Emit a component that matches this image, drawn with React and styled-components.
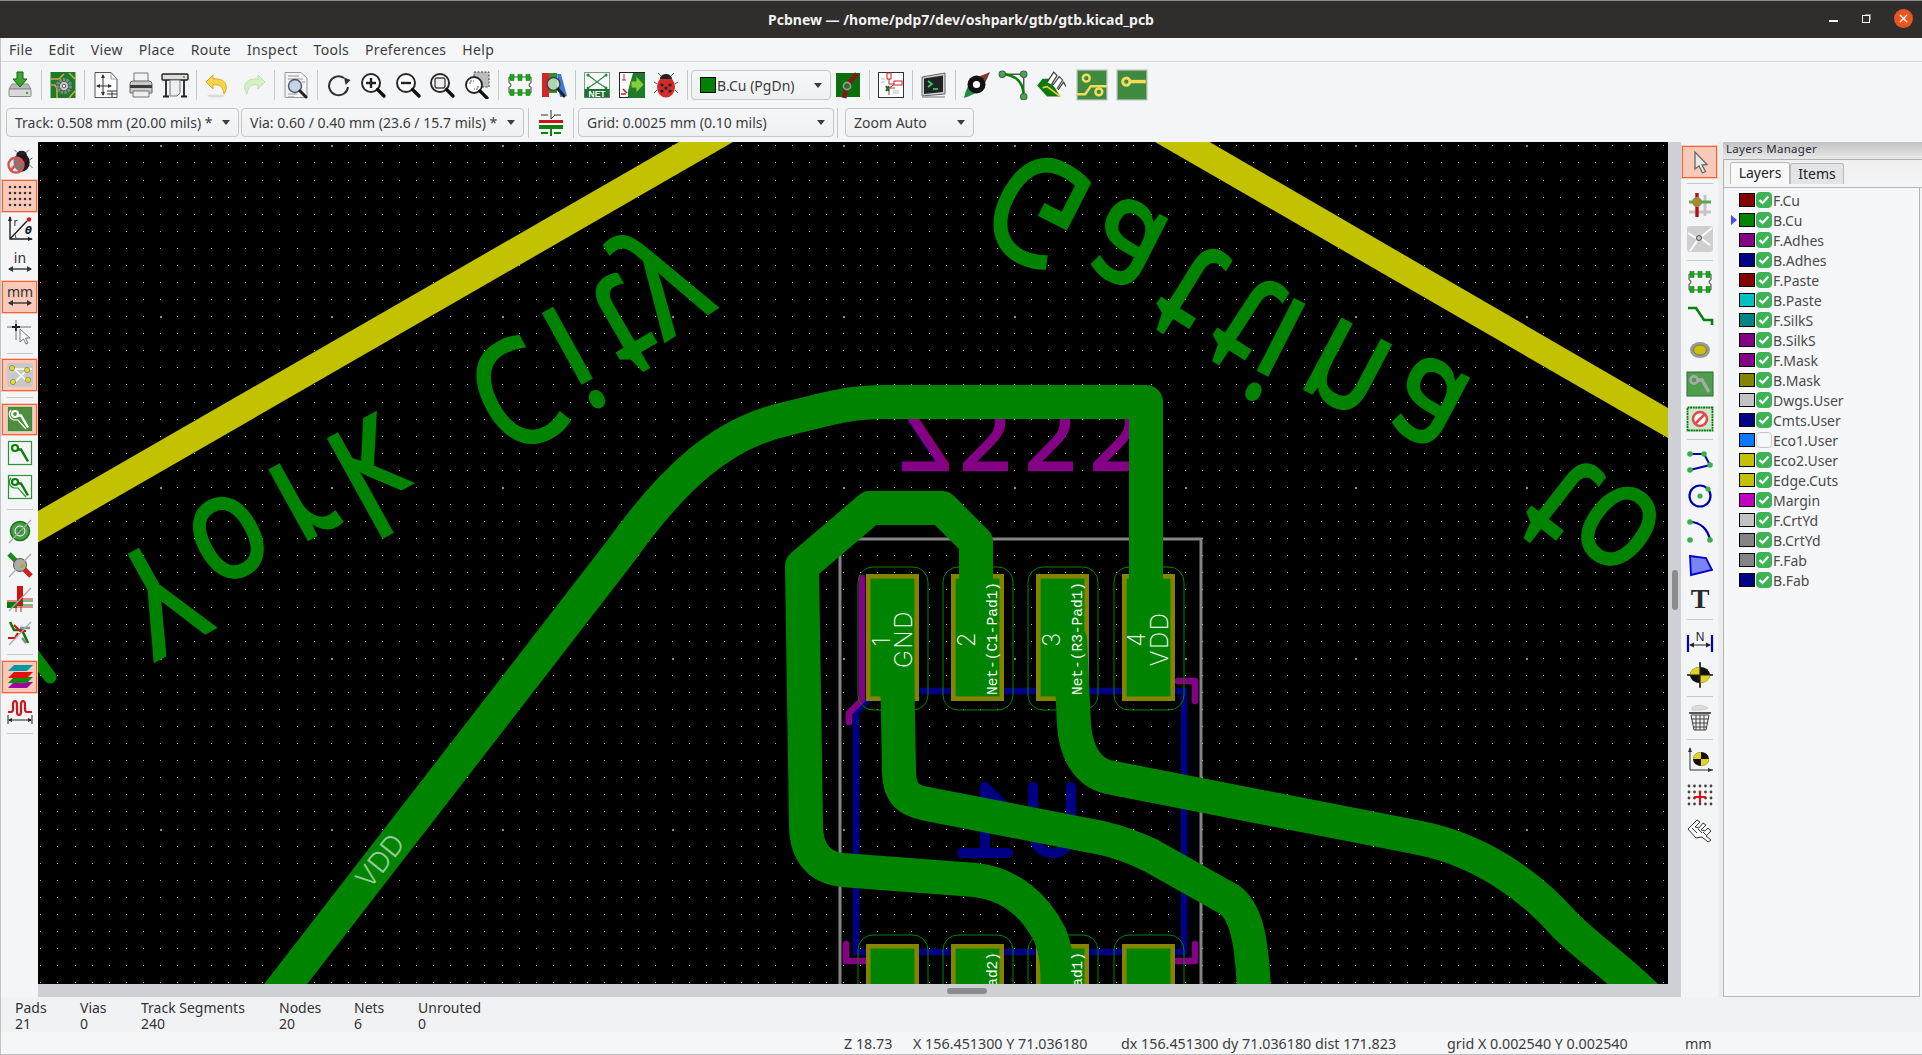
import React from "react";
import styled, { createGlobalStyle } from "styled-components";
import { X } from "lucide-react";

const GlobalStyle = createGlobalStyle`
  html, body { margin: 0; padding: 0; background: #f2f3f5; overflow: hidden; }
  body { font-family: "Noto Sans", "Open Sans", sans-serif; }
`;

const Window = styled.div`
  width: 1922px;
  height: 1055px;
  display: flex;
  flex-direction: column;
  background: #f2f3f5;
  color: #3c3c3c;
  box-sizing: border-box;
  border-left: 1px solid #c4c4c4;
  border-bottom: 1px solid #bdbdbd;
`;

const TitleBar = styled.div`
  height: 38px;
  flex: none;
  margin-left: -1px;
  box-sizing: border-box;
  border-top: 1px solid #8a8a88;
  background: #2f2e2c;
  display: grid;
  grid-template-columns: 1fr auto 1fr;
  align-items: center;
  color: #f2f2f0;
`;

const Title = styled.div`
  font-size: 14px;
  font-weight: 700;
  grid-column: 2;
  margin-top: -1px;
`;

const WindowButtons = styled.div`
  grid-column: 3;
  justify-self: end;
  display: flex;
  align-items: center;
  padding-right: 9px;
  gap: 24px;
  margin-top: -2px;
`;

const MinButton = styled.div`
  width: 9px;
  height: 2px;
  background: #f4f4f4;
  margin-top: 5px;
`;

const RestoreButton = styled.div`
  width: 6px;
  height: 6px;
  border: 1.5px solid #f4f4f4;
  box-shadow: 2px -2px 0 -1px #8a8a88;
`;

const CloseButton = styled.div`
  width: 19px;
  height: 19px;
  border-radius: 50%;
  background: #e95420;
  color: #fff;
  display: flex;
  align-items: center;
  justify-content: center;
`;

const MenuBar = styled.div`
  height: 24px;
  flex: none;
  display: flex;
  align-items: center;
  background: #f5f6f7;
  box-sizing: border-box;
  border-bottom: 1px solid #d8d9db;
  font-size: 14px;
`;

const MenuItem = styled.div`
  padding: 0 8px;
  letter-spacing: 0.3px;
`;

const TopBar = styled.div`
  height: 46px;
  flex: none;
  display: flex;
  align-items: center;
  padding-left: 2px;
  background: #f4f5f7;
`;

const SelectBar = styled.div`
  height: 34px;
  flex: none;
  display: flex;
  align-items: flex-start;
  padding-left: 5px;
  background: #f4f5f7;
`;

const ToolButton = styled.div`
  flex: none;
  width: ${(p) => (p.$vertical ? "37px" : (p.$wide || 34.5) + "px")};
  height: ${(p) => (p.$vertical ? p.$pitch + "px" : p.$short ? "29px" : "34.5px")};
  display: flex;
  align-items: center;
  justify-content: center;
  box-sizing: border-box;
  ${(p) =>
    p.$active &&
    `background: #f9c9b9;
     outline: 1.5px solid #ee6434;
     outline-offset: -2.5px;`}
`;

const HSep = styled.div`
  flex: none;
  width: 8.5px;
  height: 30px;
  display: flex;
  justify-content: center;
  &::before {
    content: "";
    width: 1px;
    background: #c6c8ca;
  }
`;

const VSep = styled.div`
  flex: none;
  height: ${(p) => p.$size}px;
  display: flex;
  align-items: center;
  justify-content: center;
  &::before {
    content: "";
    height: 1px;
    width: 26px;
    background: #c6c8ca;
  }
`;

const Select = styled.div`
  flex: none;
  width: ${(p) => p.$width}px;
  height: ${(p) => p.$height || 29}px;
  margin-left: ${(p) => p.$left || 0}px;
  box-sizing: border-box;
  border: 1px solid #c4c6c8;
  border-radius: 4px;
  background: linear-gradient(#f6f7f8, #eff0f2);
  display: flex;
  align-items: center;
  padding: 0 8px;
  font-size: 14px;
  white-space: nowrap;
`;

const Caret = styled.span`
  margin-left: auto;
  width: 0;
  height: 0;
  border-left: 4.5px solid transparent;
  border-right: 4.5px solid transparent;
  border-top: 5px solid #3c3c3c;
`;

const CuSwatch = styled.span`
  width: 14px;
  height: 14px;
  background: #008400;
  border: 1px solid #000;
  margin-right: 1px;
  flex: none;
`;

const Body = styled.div`
  height: 855px;
  flex: none;
  display: flex;
`;

const LeftBar = styled.div`
  width: 37px;
  flex: none;
  display: flex;
  flex-direction: column;
  padding-top: 3px;
  background: #f4f5f7;
`;

const RightBar = styled.div`
  width: 37px;
  flex: none;
  display: flex;
  flex-direction: column;
  align-items: center;
  padding-top: 3px;
  background: #f4f5f7;
`;

const CanvasColumn = styled.div`
  width: 1643px;
  flex: none;
  display: grid;
  grid-template-columns: 1630px 13px;
  grid-template-rows: 842px 13px;
  background: #ced0d3;
`;

const Board = styled.svg`
  display: block;
  background: #000;
  width: 1630px;
  height: 842px;
`;

const VScroll = styled.div`
  display: flex;
  align-items: flex-start;
  justify-content: center;
  padding-top: 428px;
  box-sizing: border-box;
  &::before {
    content: "";
    width: 6px;
    height: 40px;
    border-radius: 3px;
    background: #8b8c8e;
  }
`;

const HScroll = styled.div`
  display: flex;
  align-items: center;
  padding-left: 909px;
  box-sizing: border-box;
  &::before {
    content: "";
    width: 40px;
    height: 6px;
    border-radius: 3px;
    background: #8b8c8e;
  }
`;

const Sash = styled.div`
  width: 5px;
  flex: none;
  background: #eceded;
`;

const LayersManager = styled.div`
  flex: 1;
  min-width: 0;
  display: flex;
  flex-direction: column;
`;

const PaneCaption = styled.div`
  height: 17px;
  flex: none;
  background: linear-gradient(#c2c3c4, #e9e9e9);
  font-size: 11.5px;
  line-height: 14px;
  padding-left: 3px;
  letter-spacing: 0.3px;
  color: #2c2c38;
`;

const TabStrip = styled.div`
  height: 29px;
  flex: none;
  box-sizing: border-box;
  background: linear-gradient(#efefef, #f4f5f6);
  border-top: 1px solid #b0b0b0;
  border-left: 1px solid #b0b0b0;
  border-bottom: 1px solid #b5b5b5;
  display: flex;
  align-items: flex-end;
  padding-left: 6px;
`;

const Tab = styled.div`
  width: ${(p) => p.$width}px;
  height: ${(p) => (p.$active ? 22 : 21)}px;
  box-sizing: border-box;
  margin-bottom: 3px;
  border: 1px solid #b8b8b8;
  border-bottom: none;
  border-radius: 3px 3px 0 0;
  background: ${(p) => (p.$active ? "#f9f9fa" : "#e3e4e6")};
  font-size: 14px;
  line-height: 20px;
  text-align: center;
  color: #222;
`;

const LayerList = styled.div`
  flex: 1;
  box-sizing: border-box;
  border-left: 1px solid #b5b5b5;
  border-right: 1px solid #b5b5b5;
  border-bottom: 1px solid #b5b5b5;
  background: #f6f7f9;
  padding-top: 2px;
  margin-right: 2px;
`;

const LayerRow = styled.div`
  height: 20px;
  display: flex;
  align-items: center;
  font-size: 14px;
  color: #4a4a4a;
  padding-left: 7px;
`;

const ArrowSlot = styled.span`
  width: 8px;
  flex: none;
  display: flex;
  &::before {
    content: "";
    display: ${(p) => (p.$on ? "block" : "none")};
    border-top: 5.5px solid transparent;
    border-bottom: 5.5px solid transparent;
    border-left: 6px solid #4a4aff;
  }
`;

const Swatch = styled.span`
  width: 16px;
  height: 14px;
  flex: none;
  box-sizing: border-box;
  border: 1px solid #000;
  background: ${(p) => p.$color};
`;

const CheckBox = styled.span`
  width: 16px;
  height: 16px;
  flex: none;
  margin: 0 1px;
  box-sizing: border-box;
  border-radius: 4px;
  display: flex;
  align-items: center;
  justify-content: center;
  background: ${(p) => (p.$on ? "#3db454" : "#f6f7f9")};
  border: 1px solid ${(p) => (p.$on ? "#3db454" : "#c4c6c8")};
`;

const MessagePanel = styled.div`
  height: 35px;
  flex: none;
  display: flex;
  background: #f1f2f4;
  padding-left: 14px;
  font-size: 14px;
  line-height: 16px;
  padding-top: 3px;
  box-sizing: border-box;
`;

const MessageCell = styled.div`
  width: ${(p) => p.$width}px;
  flex: none;
  display: flex;
  flex-direction: column;
`;

const StatusBar = styled.div`
  flex: 1;
  min-height: 0;
  display: flex;
  align-items: center;
  background: #f5f6f8;
  font-size: 14.3px;
  white-space: nowrap;
  padding-left: 843px;
`;

const StatusField = styled.div`
  width: ${(p) => p.$width}px;
  flex: none;
`;

const Stat = styled.div`
  color: #333;
`;

/* icons, all drawn on a 28 box */
const Ico = ({ children, size = 28 }) => (
  <svg width={size} height={size} viewBox="0 0 28 28" fill="none">{children}</svg>
);

const Mag = ({ children }) => (
  <g>
    <circle cx="12" cy="12" r="9" fill="#fff" stroke="#2a2a2a" strokeWidth="2" />
    {children}
    <path d="M18.5 18.5L25 25" stroke="#111" strokeWidth="3.4" strokeLinecap="round" />
  </g>
);

const Ladybug = ({ body = "#d12b2b" }) => (
  <g>
    <path d="M9 5L6 2M19 5L22 2M5 13L2 11M23 13L26 11M5 19L2 22M23 19L26 22" stroke="#555" />
    <ellipse cx="14" cy="16" rx="9" ry="10.5" fill={body} />
    <path d="M8 8a6 5 0 0 1 12 0Z" fill="#222" />
    <circle cx="10" cy="14" r="1.6" fill="#222" /><circle cx="18" cy="14" r="1.6" fill="#222" />
    <circle cx="10" cy="20" r="1.6" fill="#222" /><circle cx="18" cy="20" r="1.6" fill="#222" />
    <circle cx="14" cy="17" r="1.6" fill="#222" />
  </g>
);

const Chip = () => (
  <g>
    <path d="M3 6H25V12A2 2 0 0 0 25 16V22H3V16A2 2 0 0 0 3 12Z" fill="#f4f4f4" stroke="#444" />
    {[4, 12, 20].map((x) => (
      <g key={x}>
        <rect x={x} y="3.5" width="4" height="6" fill="#12b012" stroke="#0a6a0a" strokeWidth=".5" />
        <rect x={x} y="18.5" width="4" height="6" fill="#12b012" stroke="#0a6a0a" strokeWidth=".5" />
      </g>
    ))}
  </g>
);

const Strike = () => <path d="M3 26L25 3" stroke="#aaa" strokeWidth="1.2" />;

const TrackBox = ({ filled, double }) => (
  <g>
    <rect x="2.5" y="2.5" width="23" height="23" fill={filled ? "#4d8f3e" : "#f4f5f7"} stroke="#2f8f3a" strokeWidth="1.2" />
    {double && <path d="M5 5a6 6 0 0 0 3 10h4l8 9" stroke={filled ? "#fff" : "#2f8f3a"} strokeWidth="1.2" />}
    <circle cx="9" cy="9" r="3" stroke={filled ? "#fff" : "#0a7d0a"} strokeWidth="2.2" />
    <path d="M12 10.5h3l7 12" stroke={filled ? "#fff" : "#0a7d0a"} strokeWidth="2.4" />
  </g>
);

const PcbGreen = ({ children }) => (
  <g>
    <rect x="1" y="1" width="26" height="26" fill="#3f8a3f" stroke="#a8b8a8" />
    {children}
  </g>
);

const MeasureText = ({ label }) => (
  <g>
    <text x="14" y="14" textAnchor="middle" fontFamily="Noto Sans, sans-serif" fontSize="14" fill="#333">{label}</text>
    <path d="M3 20H25" stroke="#333" strokeWidth="1.4" />
    <path d="M2 20L7 17V23ZM26 20L21 17V23Z" fill="#333" />
  </g>
);

const icons = {
  save: (
    <Ico>
      <path d="M3 18L6 13H22L25 18Z" fill="#b9b9b9" stroke="#8a8a8a" />
      <rect x="3" y="18" width="22" height="7.5" rx="1" fill="#d9d9d9" stroke="#8a8a8a" />
      <circle cx="21" cy="22" r="1.2" fill="#2fb32f" />
      <path d="M11 1H17V8H21L14 16L7 8H11Z" fill="#36a82b" stroke="#1c5e14" />
    </Ico>
  ),
  boardSetup: (
    <Ico>
      <rect x="1.5" y="1" width="25" height="26" fill="#1c7a2c" />
      <path d="M2 8H10L15 3M2 14H6L8 18V27M20 2L26 8M26 20L20 27" stroke="#d7a53b" strokeWidth="1.6" />
      <circle cx="15" cy="15" r="6.5" stroke="#8a8a8a" strokeWidth="3" strokeDasharray="2.4 1.2" />
      <circle cx="15" cy="15" r="4.5" fill="#cfcfcf" stroke="#666" />
      <circle cx="15" cy="15" r="1.8" fill="#fff" stroke="#555" />
    </Ico>
  ),
  pageSetup: (
    <Ico>
      <path d="M3 1.5H19L25 8V26.5H3Z" fill="#fff" stroke="#555" />
      <path d="M19 1.5V8H25" stroke="#999" />
      <path d="M11 4V24M5 15H19" stroke="#333" />
      <path d="M11 3L9 7H13ZM11 25L9 21H13ZM4 15L8 13V17ZM20 15L16 13V17Z" fill="#333" />
      <path d="M15 20H25M15 23H25M20 20V26" stroke="#333" />
    </Ico>
  ),
  print: (
    <Ico>
      <path d="M7 2H21V11H7Z" fill="#f4f4f4" stroke="#777" />
      <path d="M3 13Q3 10 6 10H22Q25 10 25 13V22H3Z" fill="#c8c8c8" stroke="#666" />
      <rect x="3" y="14" width="22" height="3" fill="#3a3a3a" />
      <path d="M6 20H22V26H6Z" fill="#eee" stroke="#777" />
    </Ico>
  ),
  plot: (
    <Ico>
      <rect x="1" y="3" width="26" height="6" rx="1" fill="#ddd" stroke="#222" strokeWidth="1.4" />
      <circle cx="23" cy="6" r="1" fill="#1faf1f" />
      <path d="M5 9V25M23 9V25M2 25.5H8M20 25.5H26" stroke="#222" strokeWidth="1.8" />
      <path d="M9 9H19V22L16 25H9Z" fill="#eee" stroke="#777" />
    </Ico>
  ),
  undo: (
    <Ico>
      <path d="M9 4L2 11L9 18V14C15 13 19 15 20 23C25 15 22 7 9 8Z" fill="#f5d44a" stroke="#d6ae25" />
      <ellipse cx="12" cy="25" rx="9" ry="1.6" fill="#ddd" />
    </Ico>
  ),
  redo: (
    <Ico>
      <path d="M19 4L26 11L19 18V14C13 13 9 15 8 23C3 15 6 7 19 8Z" fill="#d3f1c4" stroke="#bde0ab" />
    </Ico>
  ),
  find: (
    <Ico>
      <path d="M3 1.5H19L25 7V26.5H3Z" fill="#f4f4f8" stroke="#999" />
      <path d="M6 5H17M6 8H21M6 23H15M6 26H12M20 11H23" stroke="#999" />
      <circle cx="13" cy="15" r="6.5" fill="#c3d4ea" stroke="#555" strokeWidth="1.4" />
      <path d="M18 20L24 26" stroke="#222" strokeWidth="3" strokeLinecap="round" />
    </Ico>
  ),
  refresh: (
    <Ico>
      <path d="M19 7A9.5 9.5 0 1 0 23 16" stroke="#333" strokeWidth="2" />
      <path d="M18 7.5H25L22 14Z" fill="#333" transform="rotate(20 21 10)" />
    </Ico>
  ),
  zoomIn: (
    <Ico><Mag><path d="M7 12H17M12 7V17" stroke="#222" strokeWidth="2.4" /></Mag></Ico>
  ),
  zoomOut: (
    <Ico><Mag><path d="M7 12H17" stroke="#222" strokeWidth="2.4" /></Mag></Ico>
  ),
  zoomFit: (
    <Ico><Mag><rect x="7" y="7" width="10" height="10" rx="2" fill="#eee" stroke="#444" strokeWidth="1.4" /></Mag></Ico>
  ),
  zoomSel: (
    <Ico>
      <rect x="11" y="1" width="15" height="15" fill="#bbb" stroke="#444" strokeDasharray="2 1.5" />
      <circle cx="11" cy="14" r="8" fill="#fff" stroke="#222" strokeWidth="1.8" />
      <path d="M7 13V10H11M15 15V18H11" stroke="#555" strokeDasharray="2 1" />
      <path d="M17 20L24 27" stroke="#111" strokeWidth="3.2" strokeLinecap="round" />
    </Ico>
  ),
  fpEdit: <Ico><Chip /></Ico>,
  fpView: (
    <Ico>
      <path d="M2 2H9V26H2Z" fill="#d42626" />
      <path d="M17 3H21L27 25L20 26Z" fill="#3c7be0" />
      <path d="M9 2H17V22H9Z" fill="#2e8f2e" />
      <circle cx="13.5" cy="13" r="6.5" fill="#cfe6cf" fillOpacity=".8" stroke="#444" strokeWidth="1.6" />
      <path d="M18 18L24 25" stroke="#222" strokeWidth="3" strokeLinecap="round" />
    </Ico>
  ),
  net: (
    <Ico>
      <rect x="1.5" y="1.5" width="25" height="25" fill="#fff" stroke="#7aa27a" />
      <path d="M5 4L14 11L23 4M5 17L14 11L23 17" stroke="#2c8a46" strokeWidth="1.2" />
      <circle cx="5" cy="4" r="1.5" fill="#1e8c3e" /><circle cx="23" cy="4" r="1.5" fill="#1e8c3e" />
      <circle cx="5" cy="17" r="1.5" fill="#1e8c3e" /><circle cx="23" cy="17" r="1.5" fill="#1e8c3e" />
      <rect x="1.5" y="18" width="25" height="8.5" fill="#1f6f34" />
      <text x="14" y="25.5" textAnchor="middle" fontFamily="Liberation Sans, sans-serif" fontWeight="700" fontSize="8.5" fill="#fff">NET</text>
    </Ico>
  ),
  updatePcb: (
    <Ico>
      <rect x="1.5" y="1.5" width="25" height="25" fill="#fff" stroke="#222" />
      <path d="M15 2H27V27H10V20Z" fill="#1c7a2c" />
      <path d="M6 3V9M4 9H8" stroke="#c22" />
      <path d="M5 18L9 22M3 23H8" stroke="#b22" strokeWidth="1.6" />
      <path d="M19 17L14 17V10L19 10V5L27 13.5L19 22Z" fill="#7ed03c" stroke="#3d7d18" transform="translate(-1 0)" />
    </Ico>
  ),
  bug: <Ico><Ladybug /></Ico>,
  viaSwitch: (
    <Ico>
      <rect x="2" y="2" width="24" height="24" fill="#096f0b" />
      <path d="M23 3L13 14L10 27" stroke="#7a1d14" strokeWidth="5" />
      <circle cx="13" cy="15" r="3.6" fill="#2b6f2b" stroke="#9c9c9c" strokeWidth="1.6" />
    </Ico>
  ),
  schematic: (
    <Ico>
      <rect x="1.5" y="1.5" width="25" height="25" fill="#fff" stroke="#333" />
      <path d="M12 2V13H18M12 24V17L18 13M12 17H18" stroke="#a33" />
      <rect x="10" y="2" width="4" height="6" fill="#fff" stroke="#c22" />
      <rect x="17" y="10" width="8" height="4" fill="#fff" stroke="#c22" />
      <path d="M9 15L12 20M9 20L12 15" stroke="#226a22" strokeWidth="2" />
      <path d="M4 8H8M4 11H8M16 20H22M16 22H22" stroke="#bbb" />
    </Ico>
  ),
  console: (
    <Ico>
      <path d="M2 6L25 2V23L2 25Z" fill="#cfcfcf" stroke="#666" />
      <path d="M4 7.5L23 4.5V21L4 23Z" fill="#222" />
      <path d="M8 10L12 13L8 16" stroke="#35d46a" strokeWidth="1.6" />
      <path d="M13 18H18" stroke="#35d46a" strokeWidth="1.6" />
      <path d="M2 26H25" stroke="#999" strokeWidth="1.4" />
    </Ico>
  ),
  compass: (
    <Ico>
      <path d="M27 1Q23 3 17 5L22 12Q25 6 27 1Z" fill="#7a3d33" />
      <path d="M1 27Q2 21 5 15L13 22Q7 25 1 27Z" fill="#1e8a4a" />
      <circle cx="13.5" cy="13.5" r="9" fill="#111" />
      <circle cx="13.5" cy="13.5" r="3.6" fill="#fff" />
    </Ico>
  ),
  arcTune: (
    <Ico size={30}>
      <path d="M4 4H24V25" stroke="#555" strokeWidth="1.4" />
      <path d="M4 4Q24 5 24 25" stroke="#0a7d0a" strokeWidth="2.4" />
      <circle cx="4" cy="4" r="3" fill="#38b04a" stroke="#555" />
      <circle cx="24" cy="4" r="3" fill="#38b04a" stroke="#555" />
      <circle cx="24" cy="25" r="3" fill="#38b04a" stroke="#555" />
    </Ico>
  ),
  diffTune: (
    <Ico size={31}>
      <path d="M1 14L6 8H12L22 24H10Z" fill="#0c7a0c" />
      <path d="M6 16L10 15L22 24" stroke="#e8c93c" strokeWidth="1.6" />
      <path d="M10 11L16 2L19 5L14 13M15 14L21 6L24 9L19 17M20 18L25 11L27 15" stroke="#333" fill="#fff" />
    </Ico>
  ),
  pcbTwo: (
    <Ico size={32}>
      <PcbGreen>
        <circle cx="9" cy="8" r="3" stroke="#f2dc5a" strokeWidth="2.2" />
        <circle cx="20" cy="20" r="3" stroke="#f2dc5a" strokeWidth="2.2" />
        <path d="M1 22H8L13 15H27" stroke="#f2dc5a" strokeWidth="2.2" />
      </PcbGreen>
    </Ico>
  ),
  pcbOne: (
    <Ico size={32}>
      <PcbGreen>
        <circle cx="9" cy="11" r="3.2" fill="#3f8a3f" stroke="#f2dc5a" strokeWidth="2.6" />
        <path d="M12 11H26" stroke="#f2dc5a" strokeWidth="3" />
      </PcbGreen>
    </Ico>
  ),
  drcOff: (
    <Ico>
      <g transform="translate(3 0) scale(.9)"><Ladybug body="#181818" /></g>
      <circle cx="10" cy="17" r="7.5" stroke="#d6524e" strokeWidth="2.4" fill="#d9d9d9" fillOpacity=".5" />
      <path d="M5 22L15 12" stroke="#d6524e" strokeWidth="2.4" />
    </Ico>
  ),
  grid: (
    <Ico>
      {[5, 11, 17, 23].map((y) =>
        [4, 9, 14, 19, 24].map((x) => <circle key={x + "-" + y} cx={x} cy={y} r="1.3" fill="#333" />)
      )}
    </Ico>
  ),
  polar: (
    <Ico>
      <path d="M4 2V24H26M4 24L21 6" stroke="#222" strokeWidth="1.4" />
      <path d="M4 1L2 6H6ZM27 24L22 22V26Z" fill="#222" />
      <path d="M10 24A9 9 0 0 0 8 18" stroke="#444" />
      <circle cx="23" cy="4.5" r="2.2" fill="#e01010" />
      <text x="7.5" y="11" fontFamily="Noto Sans, sans-serif" fontSize="10" fill="#222">r</text>
      <text x="19" y="19" fontFamily="DejaVu Sans, sans-serif" fontStyle="italic" fontWeight="700" fontSize="10" fill="#222">θ</text>
    </Ico>
  ),
  inch: <Ico><MeasureText label="in" /></Ico>,
  mm: <Ico><MeasureText label="mm" /></Ico>,
  cursor: (
    <Ico>
      <path d="M10 3V23M1 10H25" stroke="#999" strokeWidth="1.4" />
      <path d="M10 7V14M6 10H14" stroke="#222" strokeWidth="1.8" />
      <path d="M14 12L14 25L17.5 22L20 27L22 26L19.5 21L24 21Z" fill="#fff" stroke="#777" />
    </Ico>
  ),
  ratsnest: (
    <Ico>
      <rect x="1" y="2" width="26" height="24" rx="3" fill="#c9c9c9" />
      <path d="M6 6L22 21M22 8L9 21M5 8H26" stroke="#fff" strokeWidth="1.6" />
      <circle cx="6" cy="7" r="2.6" fill="#e2e21c" stroke="#666" strokeWidth=".6" />
      <circle cx="21" cy="9" r="2.6" fill="#e2e21c" stroke="#666" strokeWidth=".6" />
      <circle cx="7" cy="21" r="2.6" fill="#e2e21c" stroke="#666" strokeWidth=".6" />
      <circle cx="22" cy="19" r="2.6" fill="#e2e21c" stroke="#666" strokeWidth=".6" />
    </Ico>
  ),
  hlFill: <Ico><TrackBox filled double /></Ico>,
  hlTrack: <Ico><TrackBox /></Ico>,
  hlClear: <Ico><TrackBox double /></Ico>,
  viaSketch: (
    <Ico>
      <circle cx="14" cy="14" r="9.5" fill="#4d9a4d" stroke="#0f7a0f" strokeWidth="1.6" />
      <circle cx="14" cy="14" r="5" stroke="#fff" />
      <circle cx="14" cy="14" r="2" stroke="#0f7a0f" />
      <Strike />
    </Ico>
  ),
  drawVia: (
    <Ico>
      <path d="M3 3L14 14" stroke="#1a8a1a" strokeWidth="5" />
      <path d="M14 14L25 25" stroke="#cf1f1f" strokeWidth="5" />
      <circle cx="14" cy="14" r="6.5" fill="#aaa" stroke="#555" />
      <path d="M15 11L19 15L14 18Z" fill="#cfa700" />
      <Strike />
    </Ico>
  ),
  clearance: (
    <Ico>
      <rect x="11" y="1" width="6" height="20" fill="#d01212" />
      <rect x="1" y="17" width="10" height="6" fill="#0d7a0d" />
      <path d="M12 14H27M1 16H12M10 20V27M15 20V27M11 22H27" stroke="#c22" />
      <path d="M11 16H27M12 20H27" stroke="#0d7a0d" />
      <Strike />
    </Ico>
  ),
  tracksX: (
    <Ico>
      <path d="M4 3L8 11H16L22 24" stroke="#0d7a0d" strokeWidth="2.6" />
      <path d="M2 19H9L12 14" stroke="#d01212" strokeWidth="2.2" />
      <path d="M14 9H24M16 19L20 24" stroke="#8a8a8a" strokeWidth="2.4" />
      <path d="M8 6L14 12H20" stroke="#d01212" strokeWidth="2.2" />
      <Strike />
    </Ico>
  ),
  layers: (
    <Ico>
      <path d="M8 15H27L21 21H2Z" fill="#a000a0" transform="translate(0 4)" />
      <path d="M8 11H27L21 17H2Z" fill="#0d8f0d" transform="translate(0 3)" />
      <path d="M8 7H27L21 13H2Z" fill="#e01010" transform="translate(0 2)" />
      <path d="M8 2H27L21 8H2Z" fill="#009aa6" />
    </Ico>
  ),
  meander: (
    <Ico>
      <path d="M2 15H5Q7 15 7 12V8Q7 4 9 4T11 8V15Q11 18 13 18T15 15V8Q15 4 17 4T19 8V12Q19 15 21 15H26" stroke="#c81818" strokeWidth="2.2" />
      <path d="M2 18V27M26 18V27M3 23H25" stroke="#222" />
      <path d="M2 23L6 21V25ZM26 23L22 21V25Z" fill="#222" />
    </Ico>
  ),
  select: (
    <Ico>
      <path d="M9 4V21L13 18L16.5 25L19.5 23.5L16 17L21 16.5Z" fill="#e8e8e8" stroke="#666" strokeWidth="1.3" />
    </Ico>
  ),
  highlight: (
    <Ico>
      <path d="M19 4V25M3 21H25" stroke="#c4c4c4" strokeWidth="3" />
      <path d="M3 11H25" stroke="#4fae4f" strokeWidth="3" />
      <path d="M11 2V26" stroke="#b80f0f" strokeWidth="3.4" />
      <circle cx="11" cy="11" r="4.6" fill="#a88a20" stroke="#888" />
    </Ico>
  ),
  localNet: (
    <Ico>
      <rect x="1" y="1" width="26" height="26" rx="3" fill="#cfcfcf" />
      <path d="M2 8L10 13M26 3L16 11M24 20L16 14M11 16L4 26" stroke="#fff" strokeWidth="2" />
      <circle cx="13" cy="13" r="2.4" stroke="#444" />
    </Ico>
  ),
  footprint: <Ico><Chip /></Ico>,
  track: (
    <Ico>
      <path d="M2 6H10L18 18H26V23" stroke="#0a800a" strokeWidth="2.6" />
    </Ico>
  ),
  via: (
    <Ico>
      <ellipse cx="14" cy="14" rx="10" ry="8" fill="#999" />
      <ellipse cx="14" cy="14" rx="6.5" ry="5" fill="#c9c400" stroke="#555" strokeWidth=".6" />
    </Ico>
  ),
  zone: (
    <Ico>
      <rect x="1" y="2" width="26" height="24" fill="#4d9f4d" stroke="#2b6f2b" />
      <circle cx="8" cy="10" r="3.6" stroke="#aaa" strokeWidth="2.6" />
      <path d="M12 10H16L23 22" stroke="#aaa" strokeWidth="3.4" />
    </Ico>
  ),
  keepout: (
    <Ico>
      <rect x="1.5" y="2.5" width="25" height="23" fill="#cfe6cf" stroke="#0a7a0a" strokeDasharray="2 .6" strokeWidth="1.8" />
      <circle cx="14" cy="14" r="7" fill="#fff" stroke="#e04a4a" strokeWidth="2.6" />
      <path d="M9 19L19 9" stroke="#e04a4a" strokeWidth="2.6" />
    </Ico>
  ),
  line: (
    <Ico>
      <path d="M4 7H18L24 18L4 23" stroke="#0000b0" strokeWidth="2" />
      <circle cx="4" cy="7" r="2.8" fill="#38b04a" /><circle cx="18" cy="7" r="2.8" fill="#38b04a" />
      <circle cx="24" cy="18" r="2.8" fill="#38b04a" /><circle cx="4" cy="23" r="2.8" fill="#38b04a" />
    </Ico>
  ),
  circle: (
    <Ico>
      <circle cx="14" cy="14" r="10.5" stroke="#0000b0" strokeWidth="2.2" />
      <circle cx="14" cy="14" r="2.6" fill="#38b04a" />
      <circle cx="22" cy="7" r="2.6" fill="#38b04a" />
    </Ico>
  ),
  arc: (
    <Ico>
      <path d="M4 6C14 6 22 13 24 24" stroke="#0000b0" strokeWidth="2.2" />
      <circle cx="4" cy="6" r="2.8" fill="#38b04a" />
      <circle cx="24" cy="24" r="2.8" fill="#38b04a" />
      <circle cx="4" cy="24" r="2.8" fill="#38b04a" />
    </Ico>
  ),
  polygon: (
    <Ico>
      <path d="M4 6L20 8L26 20L5 25Z" fill="#7a84f2" stroke="#0000d0" strokeWidth="1.8" />
    </Ico>
  ),
  textTool: (
    <Ico>
      <text x="14" y="24" textAnchor="middle" fontFamily="Liberation Serif, serif" fontWeight="700" fontSize="28" fill="#2a2a2a">T</text>
    </Ico>
  ),
  dimension: (
    <Ico>
      <path d="M2 8V25M26 8V25" stroke="#0000c0" strokeWidth="2.2" />
      <path d="M4 18H24" stroke="#222" />
      <path d="M3 18L8 15.5V20.5ZM25 18L20 15.5V20.5Z" fill="#222" />
      <text x="14" y="14" textAnchor="middle" fontFamily="Liberation Sans, sans-serif" fontSize="12" fill="#222">N</text>
    </Ico>
  ),
  target: (
    <Ico>
      <path d="M14 1V27M1 14H27" stroke="#222" strokeWidth="1.4" />
      <ellipse cx="14" cy="14" rx="10" ry="8" fill="#111" />
      <path d="M4 14A10 8 0 0 1 14 6V14ZM24 14A10 8 0 0 1 14 22V14Z" fill="#e2d321" />
      <path d="M14 2V26M2 14H26" stroke="#222" strokeWidth="1.2" />
    </Ico>
  ),
  trash: (
    <Ico>
      <path d="M3 9H25" stroke="#555" strokeWidth="2" />
      <path d="M6 3Q14 -1 22 4Q18 7 6 6Z" fill="#ddd" stroke="#ccc" />
      <path d="M5 11H23L20 26H8Z" fill="#eee" stroke="#444" />
      <path d="M5 15H23M6 19H22M7 23H21M10 11V26M14 11V26M18 11V26" stroke="#444" />
    </Ico>
  ),
  origin: (
    <Ico>
      <path d="M4 2V24H27" stroke="#333" />
      <path d="M4 1L2 6H6ZM27 24L22 22V26Z" fill="#333" />
      <ellipse cx="15" cy="13" rx="8" ry="7" fill="#111" />
      <path d="M7 13A8 7 0 0 1 15 6V13ZM23 13A8 7 0 0 1 15 20V13Z" fill="#e2d321" />
    </Ico>
  ),
  gridOrigin: (
    <Ico>
      {[5, 11, 17, 23].map((y) =>
        [3, 8.5, 14, 19.5, 25].map((x) => <circle key={x + "-" + y} cx={x} cy={y} r="1.4" fill="#444" />)
      )}
      <path d="M14 10V22M8 16H20" stroke="#e01010" strokeWidth="2" />
    </Ico>
  ),
  measure: (
    <Ico>
      <path d="M2 14L11 5L14 7L9 12L13 13L17 8L20 10L15 15L19 16L22 13L25 16L20 21L25 25L22 27L16 22L10 23Z" fill="#fff" stroke="#333" />
      <path d="M6 13L11 18M12 14L16 18M17 17L20 20" stroke="#333" />
    </Ico>
  ),
};

const topTools = [
  "save", "sep", "boardSetup", "sep", "pageSetup", "print", "plot", "sep", "undo", "redo", "sep", "find", "sep",
  "refresh", "zoomIn", "zoomOut", "zoomFit", "zoomSel", "sep", "fpEdit", "fpView", "sep", "net", "updatePcb", "bug", "sep",
];
const topToolsEnd = [["viaSwitch"], ["sep"], ["schematic"], ["sep"], ["console"], ["sep"], ["compass"], ["arcTune", 37], ["diffTune", 40], ["pcbTwo", 41], ["pcbOne", 39]];

const leftTools = [
  ["drcOff"], ["grid", 1], ["polar"], ["inch"], ["mm", 1], ["cursor"], ["sep"], ["ratsnest", 1], ["sep"],
  ["hlFill", 1], ["hlTrack"], ["hlClear"], ["sep"], ["viaSketch"], ["drawVia"], ["clearance"], ["tracksX"], ["sep"],
  ["layers", 1], ["meander"], ["sep"],
];

const rightTools = [
  ["select", 1], ["sep"], ["highlight"], ["localNet"], ["sep"], ["footprint"], ["track"], ["via"], ["zone"], ["keepout"], ["sep"],
  ["line"], ["circle"], ["arc"], ["polygon"], ["textTool"], ["sep"], ["dimension"], ["target"], ["sep"], ["trash"], ["sep"],
  ["origin"], ["gridOrigin"], ["measure"],
];

const layers = [
  ["F.Cu", "#840000"], ["B.Cu", "#008400"], ["F.Adhes", "#840084"], ["B.Adhes", "#000084"], ["F.Paste", "#840000"],
  ["B.Paste", "#00c2c2"], ["F.SilkS", "#008484"], ["B.SilkS", "#840084"], ["F.Mask", "#840084"], ["B.Mask", "#848400"],
  ["Dwgs.User", "#c2c2c2"], ["Cmts.User", "#000084"], ["Eco1.User", "#0a78ff"], ["Eco2.User", "#c2c200"], ["Edge.Cuts", "#c2c200"],
  ["Margin", "#c200c2"], ["F.CrtYd", "#c2c2c2"], ["B.CrtYd", "#848484"], ["F.Fab", "#848484"], ["B.Fab", "#000084"],
];

const stats = [
  ["Pads", "21", 65], ["Vias", "0", 61], ["Track Segments", "240", 138], ["Nodes", "20", 75], ["Nets", "6", 64], ["Unrouted", "0", 80],
];

// grid of the board, 1px dots, every tenth one heavier
const buildDots = () => {
  let small = "";
  let big = "";
  for (let i = -13; i < 85; i++) {
    for (let j = -34; j < 17; j++) {
      const x = Math.round(245.3 + 17.08 * i);
      const y = Math.round(709 + 17.08 * j);
      if (x < 38 || x > 1668 || y < 142 || y > 984) continue;
      if ((i + 1005) % 10 === 0 && (j + 1003) % 10 === 0) big += `M${x} ${y}h2v2h-2z`;
      else small += `M${x} ${y}h1v1h-1z`;
    }
  }
  return { small, big };
};
const dots = buildDots();

const padX = [866, 951, 1036, 1122];

// x, y of the baseline centre, angle, letter
const yorkLetters = [
  ["Y", 134, 552, -29], ["o", 209, 503, -29], ["r", 283, 463, -29], ["k", 348, 428, -29],
  ["C", 490, 349, -29], ["i", 548, 311, -29], ["t", 600, 283, -30], ["y", 648, 258, -33],
];
const gattinaLetters = [
  ["G", 1060, 163, 27], ["a", 1145, 208, 27], ["t", 1215, 250, 32], ["t", 1272, 282, 33], ["i", 1299, 302, 27],
  ["n", 1366, 332, 28], ["a", 1447, 367, 28], ["t", 1590, 465, 38], ["o", 1643, 495, 38],
];

const Track = styled.path`
  fill: none;
  stroke: #008400;
  stroke-width: 34;
  stroke-linejoin: round;
  stroke-linecap: round;
`;

const SilkLetter = styled.text`
  font-family: "Noto Sans", sans-serif;
  font-size: 148px;
  fill: #008400;
  stroke: #008400;
  stroke-width: 2.5;
  text-anchor: middle;
`;

const PadText = styled.text`
  font-family: ${(p) => (p.$thin ? "Inter, 'Noto Sans', sans-serif" : "'Liberation Mono', monospace")};
  font-weight: ${(p) => (p.$thin ? 200 : 400)};
  letter-spacing: ${(p) => (p.$thin ? "1.5px" : "0")};
  font-size: ${(p) => p.$size}px;
  fill: #fff;
  text-anchor: ${(p) => p.$anchor || "middle"};
`;

const PcbView = () => (
  <Board viewBox="38 142 1630 842">
    <path d={dots.small} fill="#b5b5b5" shapeRendering="crispEdges" />
    <path d={dots.big} fill="#8a8a8a" shapeRendering="crispEdges" />

    <polygon points="679,142 733,142 38,542.5 38,511" fill="#c2c200" />
    <polygon points="1155,142 1209.6,142 1668,408 1668,438" fill="#c2c200" />

    {/* bottom silk reference, mostly under the track */}
    <g fontFamily="Noto Sans, sans-serif" fontSize="90" fill="#840084" stroke="#840084" strokeWidth="2.5">
      <text transform="translate(951 470) scale(-1 1)">Z</text>
      <text x="960 1025 1090" y="470">222</text>
    </g>

    {yorkLetters.concat(gattinaLetters).map(([ch, x, y, a], i) => (
      <SilkLetter key={i} transform={`translate(${x} ${y}) rotate(${a}) scale(.83 -1)`}>{ch}</SilkLetter>
    ))}
    <path d="M30 650L50 677" stroke="#008400" strokeWidth="13" strokeLinecap="round" />

    {/* package outline */}
    <path d="M840 990V539H1201V990" fill="none" stroke="#848484" strokeWidth="3" />
    <path d="M877 691H1184V952H856V712Z" fill="none" stroke="#000084" strokeWidth="6.6" />
    <g fill="none" stroke="#840084" strokeWidth="6.5" strokeLinecap="round" strokeLinejoin="round">
      <path d="M862 578V700L849 713V722" />
      <path d="M1178 681H1195V701" />
      <path d="M846 944V961H866" />
      <path d="M1195 944V961H1175" />
    </g>

    {/* big blue marking under the tracks */}
    <g fill="none" stroke="#000084" strokeWidth="10" strokeLinecap="round">
      <path d="M985 787V853M985 787L1010 812M962 853H1008" />
      <path d="M1033 787V830C1033 848 1045 853 1052 853C1062 853 1071 848 1071 830V787" />
    </g>

    {padX.map((x) => (
      <g key={x}>
        <rect x={x - 8} y="567" width="70" height="143" rx="15" fill="none" stroke="#008400" />
        <rect x={x - 8} y="935" width="70" height="143" rx="15" fill="none" stroke="#008400" />
        <rect x={x + 2.3} y="576.3" width="48.4" height="122.4" fill="#008400" stroke="#848400" strokeWidth="4.6" />
        <rect x={x + 2.3} y="946.3" width="48.4" height="122.4" fill="#008400" stroke="#848400" strokeWidth="4.6" />
      </g>
    ))}

    <Track d="M278 994L620 552C670 482 720 432 790 418C830 408 850 402 885 402H1146V590" />
    <Track d="M976 590V542L942 508H870L802 566L806 825C806 855 822 868 842 870L975 880C1010 884 1035 905 1050 935C1056 950 1058 965 1058 994" />
    <Track d="M897 660L899 770C899 795 910 801 927 804L1102 838C1120 842 1135 848 1150 855L1230 900C1245 912 1252 935 1254 994" />
    <Track d="M1070 640L1074 725C1076 755 1090 773 1108 777L1420 838C1480 850 1530 885 1565 925C1590 950 1615 965 1650 1000" />

    <PadText $thin $size="24" transform="translate(890 641) rotate(-90)">1</PadText>
    <PadText $thin $size="24" transform="translate(912 639) rotate(-90)">GND</PadText>
    <PadText $thin $size="24" transform="translate(975 639) rotate(-90)">2</PadText>
    <PadText $size="14.5" transform="translate(997 638.5) rotate(-90)">Net-(C1-Pad1)</PadText>
    <PadText $thin $size="24" transform="translate(1060 639) rotate(-90)">3</PadText>
    <PadText $size="14.5" transform="translate(1082 638.5) rotate(-90)">Net-(R3-Pad1)</PadText>
    <PadText $thin $size="24" transform="translate(1145 639) rotate(-90)">4</PadText>
    <PadText $thin $size="24" transform="translate(1168 639) rotate(-90)">VDD</PadText>
    <PadText $size="14.5" $anchor="end" transform="translate(997 952) rotate(-90)">Net-(C1-Pad2)</PadText>
    <PadText $size="14.5" $anchor="end" transform="translate(1082 952) rotate(-90)">Net-(R3-Pad1)</PadText>

    <text
      transform="translate(382 862) rotate(-51.5)"
      textAnchor="middle"
      dominantBaseline="middle"
      fontFamily="Inter, Liberation Sans, sans-serif"
      fontWeight="300"
      fontSize="28"
      fill="#9ac89a"
    >
      VDD
    </text>
  </Board>
);

const ToolRow = ({ names }) =>
  names.map((n, i) =>
    n === "sep" ? <HSep key={i} /> : <ToolButton key={i}>{icons[n]}</ToolButton>
  );

export default function App() {
  return (
    <Window>
      <GlobalStyle />
      <TitleBar>
        <Title>Pcbnew — /home/pdp7/dev/oshpark/gtb/gtb.kicad_pcb</Title>
        <WindowButtons>
          <MinButton />
          <RestoreButton />
          <CloseButton><X size={13} strokeWidth={2.5} /></CloseButton>
        </WindowButtons>
      </TitleBar>

      <MenuBar>
        {["File", "Edit", "View", "Place", "Route", "Inspect", "Tools", "Preferences", "Help"].map((m) => (
          <MenuItem key={m}>{m}</MenuItem>
        ))}
      </MenuBar>

      <TopBar>
        <ToolRow names={topTools} />
        <Select $width={140} $height={30} $left={-1}>
          <CuSwatch />
          B.Cu (PgDn)
          <Caret />
        </Select>
        {topToolsEnd.map(([n, wide], i) =>
          n === "sep" ? <HSep key={i} /> : <ToolButton key={i} $wide={wide}>{icons[n]}</ToolButton>
        )}
      </TopBar>

      <SelectBar>
        <Select $width={233}>Track: 0.508 mm (20.00 mils) *<Caret /></Select>
        <Select $width={283} $left={2}>Via: 0.60 / 0.40 mm (23.6 / 15.7 mils) *<Caret /></Select>
        <HSep />
        <ToolButton $short $wide={37}>
          <Ico>
            <path d="M14 1V10L18 6M4 6H11M17 6H24" stroke="#333" />
            <rect x="2" y="11" width="24" height="3" fill="#d01212" />
            <rect x="2" y="16" width="24" height="4" fill="#0d800d" />
            <path d="M14 20V27M4 24H11M17 24H24" stroke="#0d800d" strokeWidth="2" />
          </Ico>
        </ToolButton>
        <HSep />
        <Select $width={255.5}>Grid: 0.0025 mm (0.10 mils)<Caret /></Select>
        <HSep />
        <Select $width={129} $left={3}>Zoom Auto<Caret /></Select>
      </SelectBar>

      <Body>
        <LeftBar>
          {leftTools.map(([n, on], i) =>
            n === "sep" ? (
              <VSep key={i} $size={10.5} />
            ) : (
              <ToolButton key={i} $vertical $pitch={33.8} $active={on}>{icons[n]}</ToolButton>
            )
          )}
        </LeftBar>

        <CanvasColumn>
          <PcbView />
          <VScroll />
          <HScroll />
          <div />
        </CanvasColumn>

        <RightBar>
          {rightTools.map(([n, on], i) =>
            n === "sep" ? (
              <VSep key={i} $size={8.4} />
            ) : (
              <ToolButton key={i} $vertical $pitch={34.25} $active={on}>{icons[n]}</ToolButton>
            )
          )}
        </RightBar>

        <Sash />

        <LayersManager>
          <PaneCaption>Layers Manager</PaneCaption>
          <TabStrip>
            <Tab $active $width={60}>Layers</Tab>
            <Tab $width={54}>Items</Tab>
          </TabStrip>
          <LayerList>
            {layers.map(([name, color]) => (
              <LayerRow key={name}>
                <ArrowSlot $on={name === "B.Cu"} />
                <Swatch $color={color} />
                <CheckBox $on={name !== "Eco1.User"}>
                  {name !== "Eco1.User" && (
                    <svg width="12" height="10" viewBox="0 0 12 10" fill="none">
                      <path d="M1.5 5L4.5 8L10.5 1.5" stroke="#fff" strokeWidth="2.2" />
                    </svg>
                  )}
                </CheckBox>
                {name}
              </LayerRow>
            ))}
          </LayerList>
        </LayersManager>
      </Body>

      <MessagePanel>
        {stats.map(([label, value, width]) => (
          <MessageCell key={label} $width={width}>
            <Stat>{label}</Stat>
            <Stat>{value}</Stat>
          </MessageCell>
        ))}
      </MessagePanel>

      <StatusBar>
        <StatusField $width={69}>Z 18.73</StatusField>
        <StatusField $width={208}>X 156.451300 Y 71.036180</StatusField>
        <StatusField $width={326}>dx 156.451300 dy 71.036180 dist 171.823</StatusField>
        <StatusField $width={238}>grid X 0.002540 Y 0.002540</StatusField>
        <StatusField $width={40}>mm</StatusField>
      </StatusBar>
    </Window>
  );
}
